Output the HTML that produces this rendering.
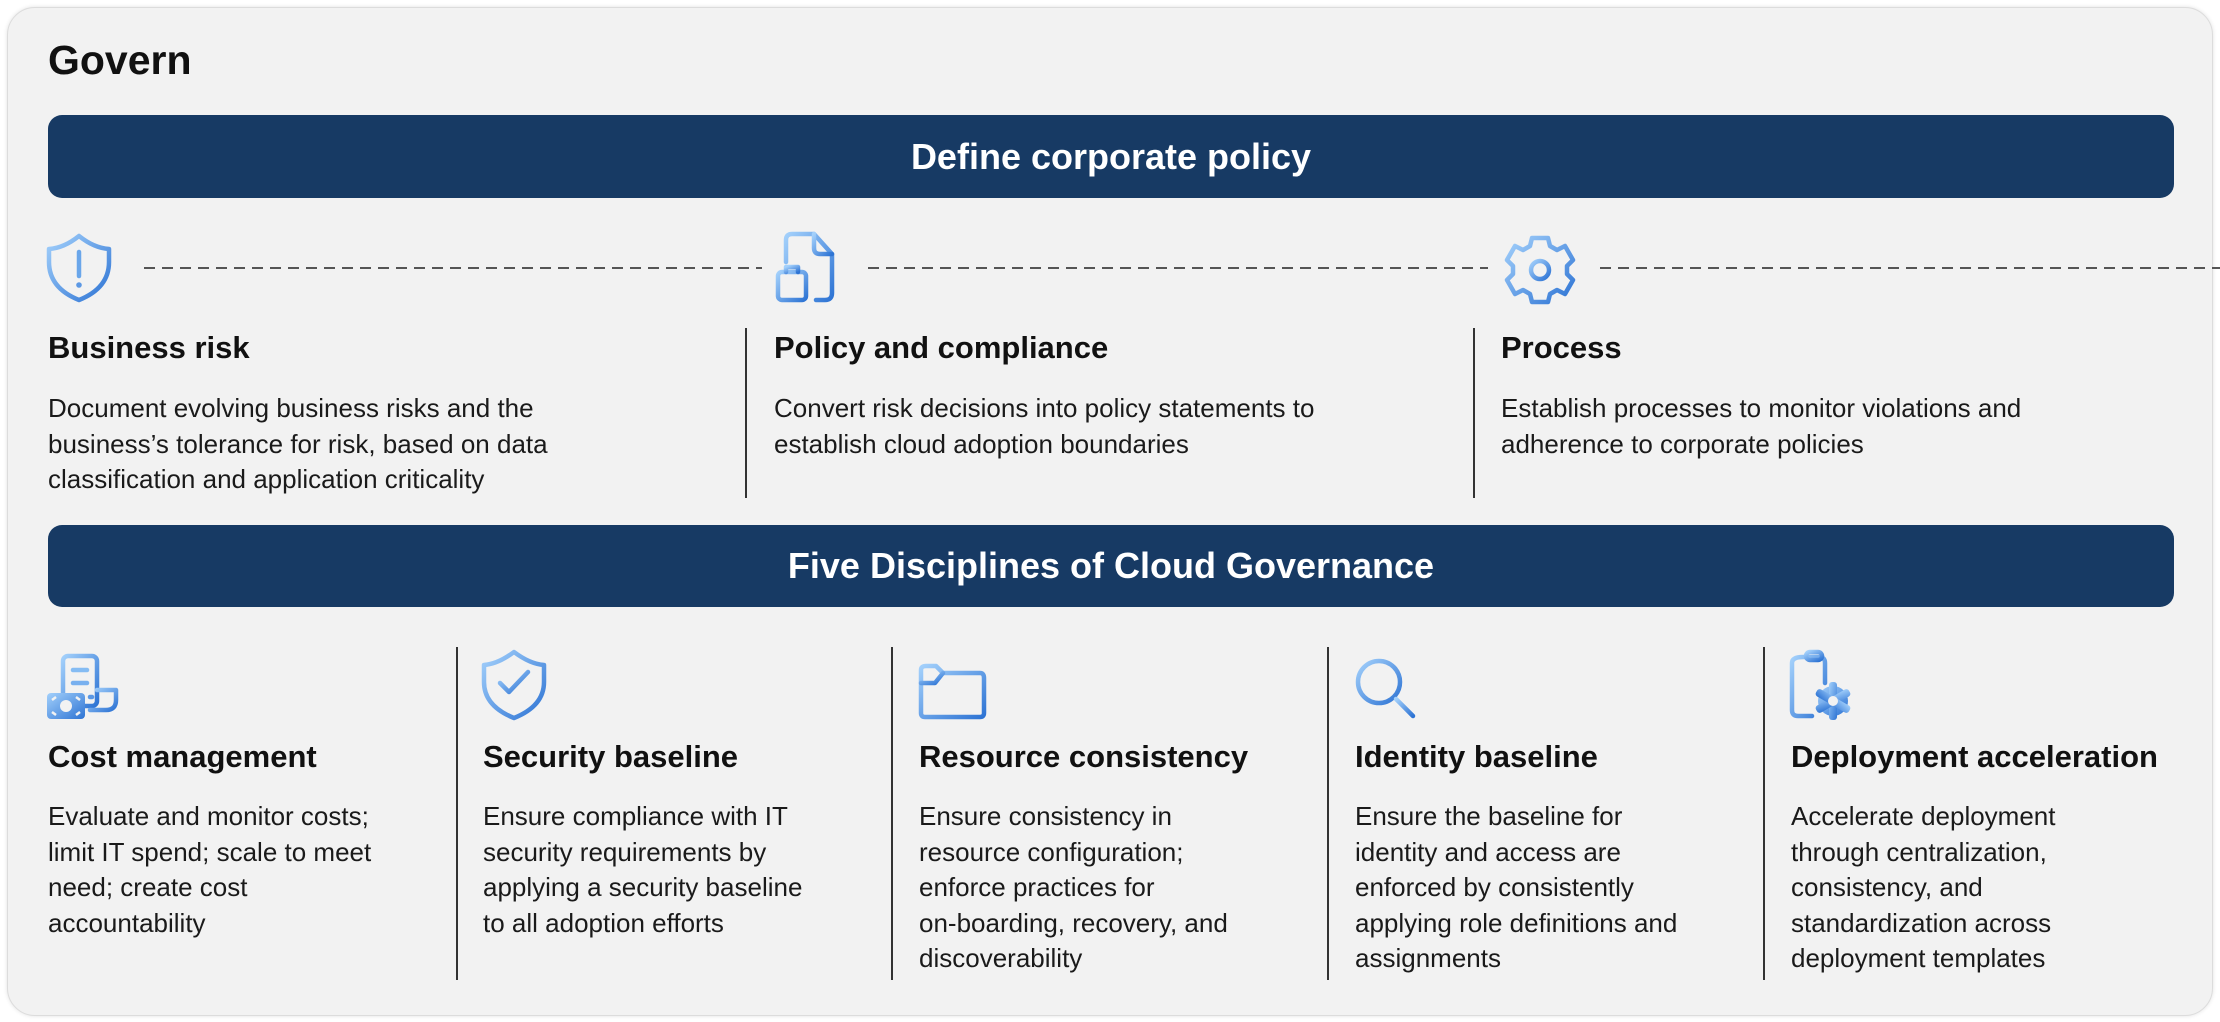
<!DOCTYPE html>
<html><head><meta charset="utf-8"><style>
html,body{margin:0;padding:0;background:#fff;}
body{width:2220px;height:1022px;position:relative;overflow:hidden;font-family:"Liberation Sans",sans-serif;color:#111;}
.card{position:absolute;left:7px;top:7px;width:2204px;height:1007px;background:#f2f2f2;border:1px solid #dcdcdc;border-radius:28px;box-shadow:0 0 4px rgba(0,0,0,.12);}
.t{position:absolute;white-space:nowrap;}
.gov{left:48px;top:37px;font-size:41px;font-weight:bold;}
.ban{position:absolute;left:48px;width:2126px;background:#173a64;border-radius:14px;color:#fff;font-weight:bold;font-size:36px;text-align:center;}
.h{font-size:31px;font-weight:bold;}
.b{font-size:26px;line-height:35.5px;color:#1a1a1a;}
</style></head><body>
<div class="card"></div>
<div class="t gov">Govern</div>
<div class="ban" style="top:115px;height:83px;line-height:83px;">Define corporate policy</div>
<div class="ban" style="top:525px;height:82px;line-height:82px;">Five Disciplines of Cloud Governance</div>

<svg style="position:absolute;left:0;top:0" width="2220" height="1022">
<defs>
<linearGradient id="g" x1="0" y1="0" x2="1" y2="1"><stop offset="0" stop-color="#a3d0fb"/><stop offset="1" stop-color="#2e74d4"/></linearGradient>
</defs>
<g stroke="#555" stroke-width="2" stroke-dasharray="11 7">
<line x1="144" y1="268" x2="762" y2="268"/>
<line x1="868" y1="268" x2="1488" y2="268"/>
<line x1="1600" y1="268" x2="2220" y2="268"/>
</g>
<g stroke="#333" stroke-width="2">
<line x1="746" y1="328" x2="746" y2="498"/>
<line x1="1474" y1="328" x2="1474" y2="498"/>
<line x1="457" y1="647" x2="457" y2="980"/>
<line x1="892" y1="647" x2="892" y2="980"/>
<line x1="1328" y1="647" x2="1328" y2="980"/>
<line x1="1764" y1="647" x2="1764" y2="980"/>
</g>
<g fill="none" stroke="url(#g)" stroke-width="4.5" stroke-linecap="round" stroke-linejoin="round">
<path d="M79 236 Q64 248 49 249 L49 262 Q49 288 79 300 Q109 288 109 262 L109 249 Q94 248 79 236 Z"/>
<path d="M786 262 L786 240 Q786 234 792 234 L814 234 L832 254 L832 293 Q832 300 825 300 L816 300"/>
<path d="M814 234 L814 248 Q814 254 820 254 L832 254"/>
<rect x="778" y="272" width="28" height="28" rx="4"/>
<path d="M786 272 L786 267 L798 267 L798 272"/>
<path d="M1532 238 L1548 238 L1550 246 L1557 250 L1565 246 L1573 260 L1567 266 L1567 274 L1573 280 L1565 294 L1557 290 L1550 294 L1548 302 L1532 302 L1530 294 L1523 290 L1515 294 L1507 280 L1513 274 L1513 266 L1507 260 L1515 246 L1523 250 L1530 246 Z"/>
<circle cx="1540" cy="270" r="9"/>
<rect x="63" y="656" width="34" height="50" rx="5"/>
<path d="M97 690 L116 690 L116 700 Q116 710 106 710 L90 710"/>
<path d="M514 652 Q498 664 484 665 L484 682 Q484 706 514 718 Q544 706 544 682 L544 665 Q530 664 514 652 Z"/>
<path d="M500 683 L509 692 L528 672"/>
<path d="M921 672 L921 670 Q921 666 926 666 L936 666 L943 673 L980 673 Q984 673 984 678 L984 713 Q984 717 980 717 L925 717 Q921 717 921 713 Z"/>
<path d="M921 683 L935 683 L943 673"/>
<circle cx="1379" cy="682" r="21"/>
<path d="M1396 699 L1413 716"/>
<path d="M1825 683 L1825 663 Q1825 657 1819 657 L1803 657 Q1792 657 1792 663 L1792 710 Q1792 716 1798 716 L1812 716"/>
<rect x="1806" y="652" width="16" height="8" rx="4"/>
</g>
<g stroke-width="4.5" stroke-linecap="round">
<line x1="79" y1="252" x2="79" y2="276" stroke="#6aa6ea"/>
<line x1="73" y1="670" x2="87" y2="670" stroke="#85bcf3"/>
<line x1="73" y1="683" x2="87" y2="683" stroke="#78b0ef"/>
<line x1="90" y1="697" x2="92" y2="697" stroke="#5c98e4"/>
</g>
<circle cx="79" cy="285" r="2.8" fill="#5c98e4"/>
<g fill="url(#g)">
<rect x="47" y="693" width="38" height="26" rx="4"/>
<circle cx="1833" cy="701" r="15"/>
<g transform="translate(1833 701)"><rect x="-4" y="-19" width="8" height="38" rx="3"/><rect x="-4" y="-19" width="8" height="38" rx="3" transform="rotate(60)"/><rect x="-4" y="-19" width="8" height="38" rx="3" transform="rotate(120)"/></g>
</g>
<g fill="#f2f2f2">
<circle cx="66" cy="706" r="6"/>
<path d="M52 700 l4 -3 M52 712 l4 3 M80 700 l-4 -3 M80 712 l-4 3" stroke="#f2f2f2" stroke-width="2.5"/>
<circle cx="1833" cy="701" r="5"/>
</g>
</svg>

<div class="t h" style="left:48px;top:330px;">Business risk</div>
<div class="t b" style="left:48px;top:391px;">Document evolving business risks and the<br>business’s tolerance for risk, based on data<br>classification and application criticality</div>
<div class="t h" style="left:774px;top:330px;">Policy and compliance</div>
<div class="t b" style="left:774px;top:391px;">Convert risk decisions into policy statements to<br>establish cloud adoption boundaries</div>
<div class="t h" style="left:1501px;top:330px;">Process</div>
<div class="t b" style="left:1501px;top:391px;">Establish processes to monitor violations and<br>adherence to corporate policies</div>

<div class="t h" style="left:48px;top:739px;">Cost management</div>
<div class="t b" style="left:48px;top:799px;">Evaluate and monitor costs;<br>limit IT spend; scale to meet<br>need; create cost<br>accountability</div>
<div class="t h" style="left:483px;top:739px;">Security baseline</div>
<div class="t b" style="left:483px;top:799px;">Ensure compliance with IT<br>security requirements by<br>applying a security baseline<br>to all adoption efforts</div>
<div class="t h" style="left:919px;top:739px;">Resource consistency</div>
<div class="t b" style="left:919px;top:799px;">Ensure consistency in<br>resource configuration;<br>enforce practices for<br>on-boarding, recovery, and<br>discoverability</div>
<div class="t h" style="left:1355px;top:739px;">Identity baseline</div>
<div class="t b" style="left:1355px;top:799px;">Ensure the baseline for<br>identity and access are<br>enforced by consistently<br>applying role definitions and<br>assignments</div>
<div class="t h" style="left:1791px;top:739px;">Deployment acceleration</div>
<div class="t b" style="left:1791px;top:799px;">Accelerate deployment<br>through centralization,<br>consistency, and<br>standardization across<br>deployment templates</div>
</body></html>
